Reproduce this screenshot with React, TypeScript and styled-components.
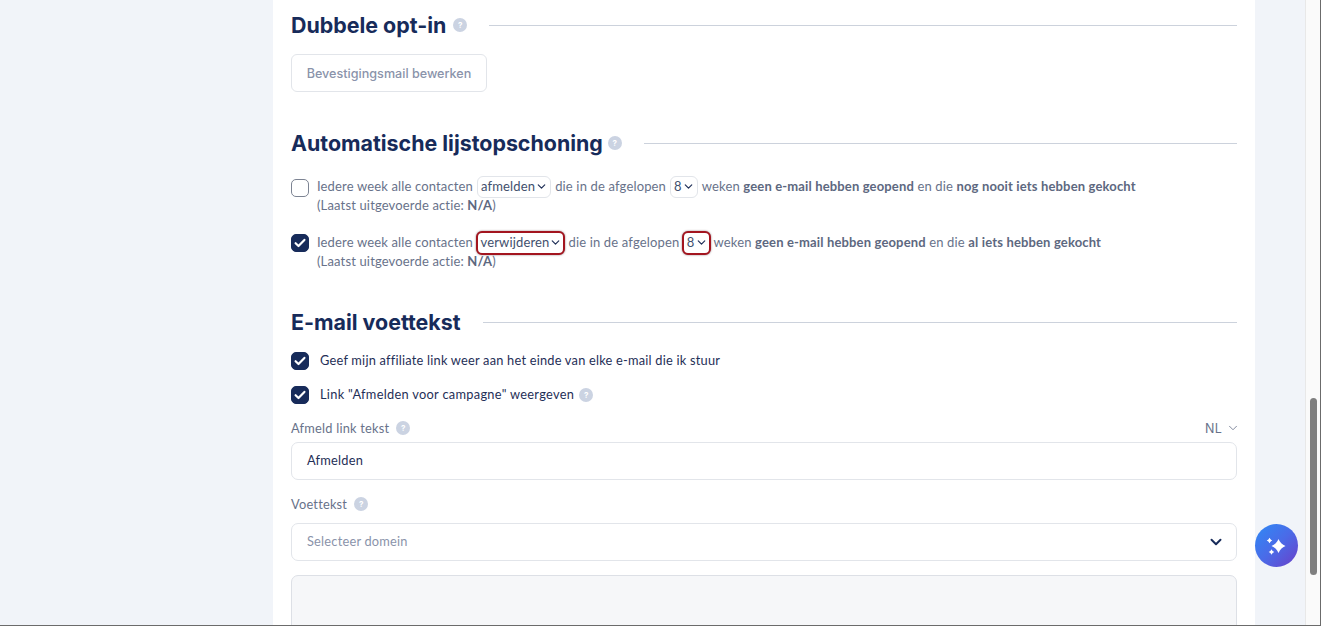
import React from 'react';
import styled, { createGlobalStyle } from 'styled-components';
import { ChevronDown } from 'lucide-react';

const GlobalStyle = createGlobalStyle`
  html, body {
    margin: 0;
    height: 628px;
    overflow: hidden;
    background: #fff;
  }
  * {
    box-sizing: border-box;
  }
`;

const Page = styled.div`
  display: flex;
  width: 1323px;
  height: 628px;
  overflow: hidden;
  position: relative;
  font-family: Lato, 'Noto Sans', sans-serif;
`;

const Shell = styled.div`
  width: 1321px;
  height: 626px;
  display: flex;
  border-right: 1px solid #6b6b6b;
  border-bottom: 1px solid #6b6b6b;
  overflow: hidden;
  position: relative;
`;

const SideGutter = styled.div<{ $width: number }>`
  width: ${(p) => p.$width}px;
  flex: none;
  background: #f1f4f9;
`;

const Panel = styled.main`
  width: 982px;
  flex: none;
  background: #fff;
  padding: 12px 18px 0;
`;

const Section = styled.section<{ $gap: number }>`
  margin-bottom: ${(p) => p.$gap}px;
`;

const HeadingRow = styled.div`
  display: flex;
  align-items: center;
  height: 26px;
`;

const Heading = styled.h2`
  margin: 0;
  font-family: Inter, sans-serif;
  font-size: 21.4px;
  font-weight: 700;
  line-height: 26px;
  color: #172b5a;
  white-space: nowrap;
`;

const HeadingRule = styled.div<{ $offset: number }>`
  flex: 1;
  height: 1px;
  margin-left: ${(p) => p.$offset}px;
  background: #ccd2dc;
`;

const Help = styled.span<{ $left?: number }>`
  display: inline-flex;
  flex: none;
  align-items: center;
  justify-content: center;
  width: 14px;
  height: 14px;
  margin-left: ${(p) => p.$left ?? 6}px;
  border-radius: 50%;
  background: #cbd3e2;
  color: #fff;
  font-family: Inter, sans-serif;
  font-size: 8px;
  font-weight: 700;
  line-height: 1;
  letter-spacing: 0;
`;

const GhostButton = styled.button`
  display: block;
  width: 196px;
  height: 38px;
  margin-top: 16px;
  padding: 0;
  background: #fff;
  border: 1px solid #e2e5ea;
  border-radius: 6px;
  font-family: Inter, sans-serif;
  font-size: 12.6px;
  font-weight: 500;
  color: #8a93aa;
`;

const CleanRow = styled.div<{ $top: number }>`
  display: flex;
  margin-top: ${(p) => p.$top}px;
`;

const Check = styled.span<{ $on?: boolean }>`
  display: flex;
  flex: none;
  align-items: center;
  justify-content: center;
  width: 18px;
  height: 18px;
  border-radius: 5px;
  background: ${(p) => (p.$on ? '#172b5a' : '#fff')};
  border: 1px solid ${(p) => (p.$on ? '#172b5a' : '#7d8493')};
`;

const CleanText = styled.div<{ $lift: number }>`
  margin: -${(p) => p.$lift}px 0 0 8px;
  font-size: 13px;
  line-height: 19px;
  color: #68728a;
  letter-spacing: 0.15px;
  white-space: nowrap;

  b {
    font-weight: 700;
    color: #5d6880;
  }
`;

const CleanLine = styled.div`
  display: flex;
  align-items: center;
  height: 19px;
  white-space: pre;
`;

const InlineSelect = styled.span<{ $alert?: boolean }>`
  display: inline-flex;
  align-items: center;
  height: ${(p) => (p.$alert ? 24 : 22)}px;
  margin: ${(p) => (p.$alert ? '0 3px' : '0 4px')};
  padding: ${(p) => (p.$alert ? '0 1px 0 2.5px' : '0 2px 0 3px')};
  background: #fff;
  border: ${(p) => (p.$alert ? '2.5px solid #a3151f' : '1px solid #e2e5ea')};
  border-radius: 6px;
  color: #42506d;
  box-shadow: ${(p) => (p.$alert ? '0 0 2px rgba(60, 20, 30, 0.6)' : 'none')};
`;

const TickRow = styled.label<{ $top: number; $spacing: number }>`
  display: flex;
  align-items: center;
  gap: 11px;
  height: 18px;
  margin-top: ${(p) => p.$top}px;
  font-size: 12.8px;
  letter-spacing: ${(p) => p.$spacing}px;
  color: #1f2f57;
`;

const TickLabel = styled.span`
  margin-top: -2px;
`;

const FieldLabelRow = styled.div<{ $top: number }>`
  display: flex;
  align-items: center;
  height: 16px;
  margin-top: ${(p) => p.$top}px;
  font-size: 12.8px;
  letter-spacing: 0.22px;
  color: #68728a;
`;

const LangPick = styled.span`
  display: flex;
  align-items: center;
  gap: 4px;
  margin-left: auto;
  margin-right: -3px;
  font-family: Inter, sans-serif;
  font-size: 12.5px;
  color: #68728a;
`;

const Field = styled.div<{ $top: number }>`
  display: flex;
  align-items: center;
  justify-content: space-between;
  height: 38px;
  margin-top: ${(p) => p.$top}px;
  padding: 0 11px 0 15px;
  background: #fff;
  border: 1px solid #e2e5ea;
  border-radius: 7px;
`;

const FieldValue = styled.span<{ $muted?: boolean }>`
  font-size: 12.8px;
  letter-spacing: 0.22px;
  color: ${(p) => (p.$muted ? '#8a93aa' : '#1f2f57')};
  padding-bottom: ${(p) => (p.$muted ? 2 : 3)}px;
`;

const EditorBox = styled.div`
  height: 80px;
  margin-top: 14px;
  background: #f6f7f9;
  border: 1px solid #dde0e6;
  border-radius: 7px;
`;

const ScrollTrack = styled.div`
  width: 16px;
  flex: none;
  padding: 398px 4px 0;
  background: #fafafa;
  border-left: 1px solid #e8e8e8;
`;

const ScrollThumb = styled.div`
  width: 7px;
  height: 177px;
  border-radius: 4px;
  background: #7f7f7f;
`;

const Assistant = styled.button`
  position: absolute;
  left: 1255px;
  top: 524px;
  display: flex;
  align-items: center;
  justify-content: center;
  width: 43px;
  height: 43px;
  padding: 0;
  border: 0;
  border-radius: 50%;
  background: linear-gradient(135deg, #2f8af5 0%, #4a6be8 50%, #6a3fc8 100%);
`;

const Tick = () => (
  <svg width="12" height="10" viewBox="0 0 12 10" fill="none">
    <path d="M1.6 5.200 4.500 8 10.400 1.900" stroke="#fff" strokeWidth="2.2" strokeLinecap="round" strokeLinejoin="round" />
  </svg>
);

const Sparkles = () => (
  <svg width="22" height="22" viewBox="0 0 22 22" fill="#fff">
    <path d="M12.500 4Q14.500 9 19.500 11 14.500 13 12.500 18 10.500 13 5.500 11 10.500 9 12.500 4Z" />
    <path d="M3.500 2.700Q4.300 4.700 6.300 5.500 4.300 6.300 3.500 8.300 2.700 6.300.7 5.500 2.700 4.700 3.500 2.700Z" />
    <path d="M5.500 14.200Q6.300 16.200 8.300 17 6.300 17.800 5.500 19.800 4.700 17.800 2.700 17 4.700 16.200 5.500 14.200Z" />
  </svg>
);

const Caret = () => <ChevronDown size={13} strokeWidth={2.2} color="#1f2f57" />;

export default function App() {
  return (
    <Page>
      <GlobalStyle />
      <Shell>
        <SideGutter $width={273} />
        <Panel>
          <Section $gap={38}>
            <HeadingRow>
              <Heading>Dubbele opt-in</Heading>
              <Help $left={7}>?</Help>
              <HeadingRule $offset={22} />
            </HeadingRow>
            <GhostButton>Bevestigingsmail bewerken</GhostButton>
          </Section>

          <Section $gap={38}>
            <HeadingRow>
              <Heading>Automatische lijstopschoning</Heading>
              <Help $left={5}>?</Help>
              <HeadingRule $offset={22} />
            </HeadingRow>
            <CleanRow $top={23}>
              <Check />
              <CleanText $lift={2}>
                <CleanLine>
                  Iedere week alle contacten
                  <InlineSelect>afmelden<Caret /></InlineSelect>
                  die in de afgelopen
                  <InlineSelect>8<Caret /></InlineSelect>
                  weken <b>geen e-mail hebben geopend</b> en die <b>nog nooit iets hebben gekocht</b>
                </CleanLine>
                <CleanLine>
                  (Laatst uitgevoerde actie: <b>N/A</b>)
                </CleanLine>
              </CleanText>
            </CleanRow>
            <CleanRow $top={19}>
              <Check $on><Tick /></Check>
              <CleanText $lift={1}>
                <CleanLine>
                  Iedere week alle contacten
                  <InlineSelect $alert>verwijderen<Caret /></InlineSelect>
                  die in de afgelopen
                  <InlineSelect $alert>8<Caret /></InlineSelect>
                  weken <b>geen e-mail hebben geopend</b> en die <b>al iets hebben gekocht</b>
                </CleanLine>
                <CleanLine>
                  (Laatst uitgevoerde actie: <b>N/A</b>)
                </CleanLine>
              </CleanText>
            </CleanRow>
          </Section>

          <Section $gap={0}>
            <HeadingRow>
              <Heading>E-mail voettekst</Heading>
              <HeadingRule $offset={22} />
            </HeadingRow>
            <TickRow $top={17} $spacing={0.22}>
              <Check $on><Tick /></Check>
              <TickLabel>Geef mijn affiliate link weer aan het einde van elke e-mail die ik stuur</TickLabel>
            </TickRow>
            <TickRow $top={16} $spacing={0.3}>
              <Check $on><Tick /></Check>
              <TickLabel>Link "Afmelden voor campagne" weergeven</TickLabel>
              <Help $left={-6}>?</Help>
            </TickRow>
            <FieldLabelRow $top={16}>
              Afmeld link tekst
              <Help $left={7}>?</Help>
              <LangPick>
                NL
                <ChevronDown size={14} strokeWidth={1.4} color="#68728a" />
              </LangPick>
            </FieldLabelRow>
            <Field $top={6}>
              <FieldValue>Afmelden</FieldValue>
            </Field>
            <FieldLabelRow $top={16}>
              Voettekst
              <Help $left={7}>?</Help>
            </FieldLabelRow>
            <Field $top={11}>
              <FieldValue $muted>Selecteer domein</FieldValue>
              <ChevronDown size={18} strokeWidth={2.6} color="#172b5a" />
            </Field>
            <EditorBox />
          </Section>
        </Panel>
        <SideGutter $width={50} />
        <ScrollTrack>
          <ScrollThumb />
        </ScrollTrack>
        <Assistant aria-label="Assistent">
          <Sparkles />
        </Assistant>
      </Shell>
    </Page>
  );
}
